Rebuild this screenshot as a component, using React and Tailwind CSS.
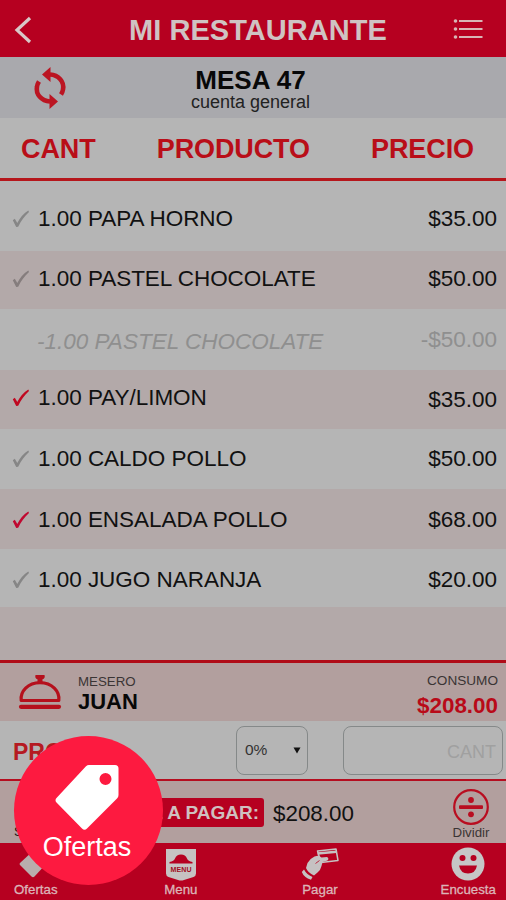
const items = [
  { name: "1.00 PAPA HORNO", price: "$35.00", check: "text-[#868686]", row: "h-[70px] bg-[#b5b5b5] pt-[5px]" },
  { name: "1.00 PASTEL CHOCOLATE", price: "$50.00", check: "text-[#857d7d]", row: "h-[58px] bg-[#b3a9a9] pb-[3px]" },
  { name: "-1.00 PASTEL CHOCOLATE", price: "-$50.00", cancelled: true, row: "h-[61px] bg-[#b5b5b5]" },
  { name: "1.00 PAY/LIMON", price: "$35.00", check: "text-[#c00820]", row: "h-[59px] bg-[#b3a9a9] pb-[3px]", priceClass: "pt-[4px]" },
  { name: "1.00 CALDO POLLO", price: "$50.00", check: "text-[#868686]", row: "h-[60px] bg-[#b5b5b5]" },
  { name: "1.00 ENSALADA POLLO", price: "$68.00", check: "text-[#c00830]", row: "h-[60px] bg-[#b3a9a9] pt-[2px]" },
  { name: "1.00 JUGO NARANJA", price: "$20.00", check: "text-[#868686]", row: "h-[58px] bg-[#b5b5b5] pt-[4px]" },
];

function BackIcon() {
  return (
    <svg viewBox="0 0 18 28" className="w-[18px] h-[28px]" fill="none" stroke="#d8c8c8" strokeWidth="3.2">
      <path d="M16 2 3 14 16 26" />
    </svg>
  );
}

function CheckIcon({ className }) {
  return (
    <svg viewBox="0 0 18 18" className={"w-[18px] h-[18px] " + className} fill="currentColor">
      <path d="M.8 10.200 2.800 8.800 5.300 13C7.700 8.300 11.400 3.600 16.300.6L17 1.900C12.500 5.900 9 10.800 6.200 16.700L4.200 16.900Z" />
    </svg>
  );
}

function SyncIcon() {
  return (
    <svg viewBox="0 0 34 44" className="w-[34px] h-[44px]" fill="none" stroke="#bb1522" strokeWidth="4.6">
      <path d="M17 8.500C25.500 9 31.500 15.500 30 23.500 29.700 25.500 29 27 28 28.500" />
      <path d="M17 35.500C8.500 35 2.500 28.500 4 20.500 4.300 18.500 5 17 6 15.500" />
      <path d="M17.500 1V16L9 8.500ZM16.500 28V43L25 35.500Z" fill="#bb1522" stroke="none" />
    </svg>
  );
}

function ListIcon() {
  return (
    <svg viewBox="0 0 30 22" className="w-[30px] h-[22px]" fill="#d8b5b5">
      <circle cx="2.500" cy="3" r="1.800" />
      <circle cx="2.500" cy="11" r="1.800" />
      <circle cx="2.500" cy="19" r="1.800" />
      <path d="M6 2H29.500V4H6ZM6 10H29.500V12H6ZM6 18H29.500V20H6Z" />
    </svg>
  );
}

function BellIcon() {
  return (
    <svg viewBox="0 0 44 36" className="w-[44px] h-[36px]" fill="none" stroke="#b5101c" strokeWidth="3.200">
      <path d="M3.200 26.500C2 17.500 10 8.600 22 8.600S42 17.500 40.800 26.500Z" strokeLinejoin="round" />
      <path d="M3 32.800H41" strokeWidth="4.200" strokeLinecap="round" />
      <path d="M17.500 1H26.500Q27.500 4.600 24.500 5.200V8H19.500V5.200Q16.500 4.600 17.500 1Z" fill="#b5101c" stroke="none" />
    </svg>
  );
}

function TagIcon() {
  return (
    <svg viewBox="0 0 64 66" className="w-[64px] h-[66px] -ml-[4px]" fill="#fff">
      <path
        fillRule="evenodd"
        d="M34 1H60Q63.500 1 63.500 4.500V31Q63.500 33 62 34.500L32 64.500Q29.500 67 27 64.500L1.500 38.500Q-.5 36 1.500 34L31 2.200Q32.300 1 34 1ZM50.500 9A6 6 0 1 0 50.500 21 6 6 0 1 0 50.500 9Z"
      />
    </svg>
  );
}

function DivideIcon() {
  return (
    <svg viewBox="0 0 38 38" className="w-[38px] h-[38px]" fill="#b90d20">
      <circle cx="19" cy="19" r="16.800" fill="none" stroke="#b90d20" strokeWidth="2.200" />
      <rect x="7" y="17.300" width="24" height="3.600" rx="1" />
      <circle cx="19" cy="12" r="2.900" />
      <circle cx="19" cy="26.300" r="2.900" />
    </svg>
  );
}

function MenuIcon() {
  return (
    <svg viewBox="0 0 32 33" className="w-[32px] h-[33px]">
      <path d="M1 1H31V25.500Q31 28 28.500 29L19 32Q16 33 13 32L3.500 29Q1 28 1 25.500Z" fill="#c6c2c2" />
      <path d="M4.500 14Q9 13 10 10.500Q11.500 6.500 16 6.500T22 10.500Q23 13 27.500 14V15.500H4.500Z" fill="#b60020" />
      <text x="16" y="24" textAnchor="middle" textLength="21" fontSize="7" fontWeight="bold" fill="#a00a20">
        MENU
      </text>
    </svg>
  );
}

function PayIcon() {
  return (
    <svg viewBox="0 0 38 33" className="w-[38px] h-[33px]">
      <path d="M16.500 3 35 1 37 12.500 20 14.500Z" fill="#b60020" stroke="#c6c2c2" strokeWidth="1.500" strokeLinejoin="round" />
      <path d="M16.500 5.500 35.500 3.800" stroke="#c6c2c2" strokeWidth="2.400" />
      <path
        d="M5 20 6.500 15Q9 10.500 13.500 8.500L17.500 7.500 20.500 9.500 26 9Q28.500 10.500 26.500 12.500L21.500 14 20.500 18Q19.500 22.500 16.500 24.500L13 27.500Q7 25 5 20Z"
        fill="#c6c2c2"
      />
      <path d="M3 21.500Q5.500 26.500 11.500 29L10 31.800Q3 29.500 .8 24Z" fill="#c6c2c2" />
      <path d="M14.500 15.500 18.500 12.500" stroke="#b60020" strokeWidth=".8" />
    </svg>
  );
}

function SmileIcon() {
  return (
    <svg viewBox="0 0 34 34" className="w-[34px] h-[34px]">
      <circle cx="17" cy="17" r="16.500" fill="#c6c6c6" />
      <circle cx="11.500" cy="11" r="3" fill="#b60020" />
      <circle cx="22.500" cy="11" r="3" fill="#b60020" />
      <path d="M8 18.500H26Q24.500 26.500 17 26.500T8 18.500Z" fill="#b60020" />
    </svg>
  );
}

function NavItem({ label, icon, className = "" }) {
  return (
    <div className={"flex flex-col items-center " + className}>
      <div className="h-[36px] flex items-center">{icon}</div>
      <span className="text-[13.3px] leading-[16px] text-[#dcb4b8] [-webkit-text-stroke:0.3px]">{label}</span>
    </div>
  );
}

export default function App() {
  return (
    <div className="relative w-[506px] h-[900px] overflow-hidden flex flex-col bg-[#b5b5b5] text-[#111] font-['Liberation_Sans',Arial,sans-serif] whitespace-nowrap">
      <header className="h-[57px] shrink-0 bg-[#b60020] grid grid-cols-[120px_1fr_110px] items-center">
        <div className="pl-[14px] pt-[3px]">
          <BackIcon />
        </div>
        <h1 className="text-center text-[29px] font-bold tracking-[0.05px] text-[#cfc3c3] pt-[4px]">
          MI RESTAURANTE
        </h1>
        <div className="flex justify-end pr-[23px]">
          <ListIcon />
        </div>
      </header>

      <section className="h-[61px] shrink-0 bg-[#a9a9ad] grid grid-cols-[100px_1fr_105px] items-center">
        <div className="flex justify-center">
          <SyncIcon />
        </div>
        <div className="text-center pt-[2px]">
          <div className="text-[26px] leading-[26px] font-bold text-[#080808]">MESA 47</div>
          <div className="text-[18px] leading-[18px] text-[#222]">cuenta general</div>
        </div>
      </section>

      <div className="h-[63px] shrink-0 flex justify-between items-center pl-[21px] pr-[32px] pt-[3px] border-b-[3px] border-[#b5161b] text-[27px] font-bold tracking-[-0.1px] text-[#b90e18]">
        <span>CANT</span>
        <span>PRODUCTO</span>
        <span>PRECIO</span>
      </div>

      <main className="shrink-0">
        {items.map((item, i) => (
          <div
            key={i}
            className={
              "flex items-center pl-[12px] pr-[9px] text-[22.5px] " +
              item.row +
              (item.cancelled ? " text-[#8f8f8f]" : "")
            }
          >
            <div className="w-[26px] shrink-0">{item.check && <CheckIcon className={item.check} />}</div>
            <span className={item.cancelled ? "italic pt-[4px] -ml-px" : "tracking-[-0.03px]"}>{item.name}</span>
            <span className={"ml-auto " + (item.priceClass || "")}>{item.price}</span>
          </div>
        ))}
        <div className="h-[53px] bg-[#b3a9a9]" />
      </main>

      <section className="h-[61px] shrink-0 bg-[#b29f9e] border-t-[3px] border-[#b00c18] flex items-center pl-[18px] pr-[8px]">
        <BellIcon />
        <div className="ml-[16px] pt-[2px]">
          <div className="text-[13.3px] leading-[18px] text-[#3a3434]">MESERO</div>
          <div className="text-[22px] leading-[22px] font-bold text-[#080808]">JUAN</div>
        </div>
        <div className="ml-auto text-right pt-[7px]">
          <div className="text-[13.6px] leading-[20px] text-[#3a3434]">CONSUMO</div>
          <div className="text-[22.4px] leading-[29px] font-bold text-[#b90a18]">$208.00</div>
        </div>
      </section>

      <section className="h-[58px] shrink-0 flex items-center pl-[13px] pr-[3px]">
        <span className="text-[23px] font-bold text-[#b51a22] pt-[4px]">PROPINA</span>
        <div className="ml-auto w-[72px] h-[49px] rounded-[8px] border border-[#858989] flex items-center justify-between pl-[8px] pr-[6px]">
          <span className="text-[15.5px] text-[#333]">0%</span>
          <svg viewBox="0 0 8 8" className="w-[8px] h-[8px]" fill="#111">
            <path d="M.5 1.500H7.500L4 7.500Z" />
          </svg>
        </div>
        <div className="ml-[35px] w-[160px] h-[49px] rounded-[8px] border border-[#858989] flex items-center justify-end pr-[6px]">
          <span className="text-[18px] text-[#a0a0a0] pt-[4px]">CANT</span>
        </div>
      </section>

      <section className="h-[64px] shrink-0 bg-[#b29f9e] border-t-2 border-[#b50e20] flex items-center pl-[14px] pr-[16px]">
        <span className="text-[13.3px] self-end pb-px w-[76px]">S</span>
        <span className="w-[174px] h-[29px] rounded-[3px] bg-[#b60020] text-[#cfc0c0] text-[19px] font-bold flex items-center justify-end pr-[5px] pt-[2px]">
          TOTAL A PAGAR:
        </span>
        <span className="text-[22.4px] ml-[9px] pt-[4px]">$208.00</span>
        <div className="ml-auto flex flex-col items-center pt-[3px]">
          <DivideIcon />
          <span className="text-[13.3px] leading-[14px] text-[#3a3434]">Dividir</span>
        </div>
      </section>

      <nav className="h-[57px] shrink-0 bg-[#b60020] flex justify-between pt-[3px] pl-[14px] pr-[10px]">
        <NavItem
          label="Ofertas"
          icon={
            <svg viewBox="0 0 28 28" className="w-[28px] h-[28px] -translate-x-[3px]" fill="#b9adad">
              <path d="M14 1 27 14 15.500 26.500Q14 28 12.500 26.500L1 15Q0 14 1 13Z" />
            </svg>
          }
        />
        <NavItem label="Menu" icon={<MenuIcon />} className="ml-[5px]" />
        <NavItem label="Pagar" icon={<PayIcon />} className="ml-[2px]" />
        <NavItem label="Encuesta" icon={<SmileIcon />} />
      </nav>

      <button className="absolute left-[14px] top-[736px] w-[149px] h-[149px] rounded-full bg-[#fd1a40] text-white flex flex-col items-center pt-[28px]">
        <TagIcon />
        <span className="text-[27px] leading-[32px] mt-[1px] -ml-[3px]">Ofertas</span>
      </button>
    </div>
  );
}
